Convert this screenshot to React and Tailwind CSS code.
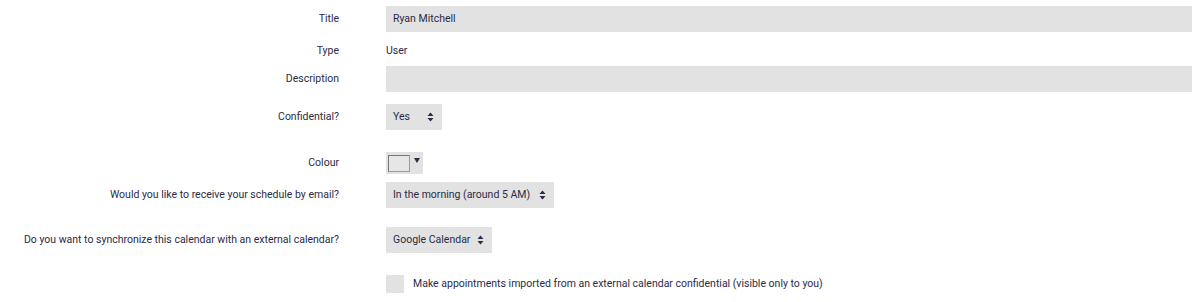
import React from 'react';

const font = { fontFamily: 'Roboto, "Noto Sans", sans-serif' };

function Arrows() {
  return (
    <svg width="7" height="10" viewBox="0 0 7 10" className="shrink-0">
      <path d="M3.5 0.5 L6.5 4 L0.5 4 Z" fill="#2b2b45" />
      <path d="M3.5 9.5 L6.5 6 L0.5 6 Z" fill="#2b2b45" />
    </svg>
  );
}

function Row({ label, className = '', children }) {
  return (
    <div className={`flex items-center ${className}`}>
      <div className="w-[339px] shrink-0 text-right">{label}</div>
      <div className="ml-[47px] flex-1 flex items-center h-full">{children}</div>
    </div>
  );
}

function Select({ value, w }) {
  return (
    <div className={`h-[26px] ${w} bg-[#e2e2e2] flex items-center justify-between pl-[7px] pr-[8px]`}>
      <span>{value}</span>
      <Arrows />
    </div>
  );
}

export default function App() {
  return (
    <div className="w-[1200px] h-[302px] bg-white text-[10.5px] text-[#2b2b45] flex flex-col" style={font}>
      <Row label="Title" className="mt-[6px] h-[26px]">
        <div className="h-[26px] w-[806px] bg-[#e2e2e2] flex items-center pl-[7px]">Ryan Mitchell</div>
      </Row>
      <Row label="Type" className="mt-[6px] h-[26px]">
        <span>User</span>
      </Row>
      <Row label="Description" className="mt-[2px] h-[26px]">
        <div className="h-[26px] w-[806px] bg-[#e2e2e2]" />
      </Row>
      <Row label="Confidential?" className="mt-[12px] h-[26px]">
        <Select value="Yes" w="w-[56px]" />
      </Row>
      <Row label="Colour" className="mt-[22px] h-[22px]">
        <div className="h-[22px] w-[37px] bg-[#e2e2e2] flex items-center pl-[2px]">
          <div className="w-[22px] h-[17px] bg-[#e6e6e6] border border-t-[#767676] border-l-[#767676] border-r-[#9a9a9a] border-b-[#9a9a9a]" />
          <svg width="6" height="5" viewBox="0 0 6 5" className="ml-[4px] -mt-[6px]">
            <path d="M0 0 L6 0 L3 5 Z" fill="#2b2b45" />
          </svg>
        </div>
      </Row>
      <Row label="Would you like to receive your schedule by email?" className="mt-[8px] h-[26px]">
        <Select value="In the morning (around 5 AM)" w="w-[168px]" />
      </Row>
      <Row label="Do you want to synchronize this calendar with an external calendar?" className="mt-[19px] h-[26px]">
        <Select value="Google Calendar" w="w-[106px]" />
      </Row>
      <Row label="" className="mt-[22px] h-[18px]">
        <div className="w-[18px] h-[18px] bg-[#e2e2e2]" />
        <span className="ml-[9px]">Make appointments imported from an external calendar confidential (visible only to you)</span>
      </Row>
    </div>
  );
}
